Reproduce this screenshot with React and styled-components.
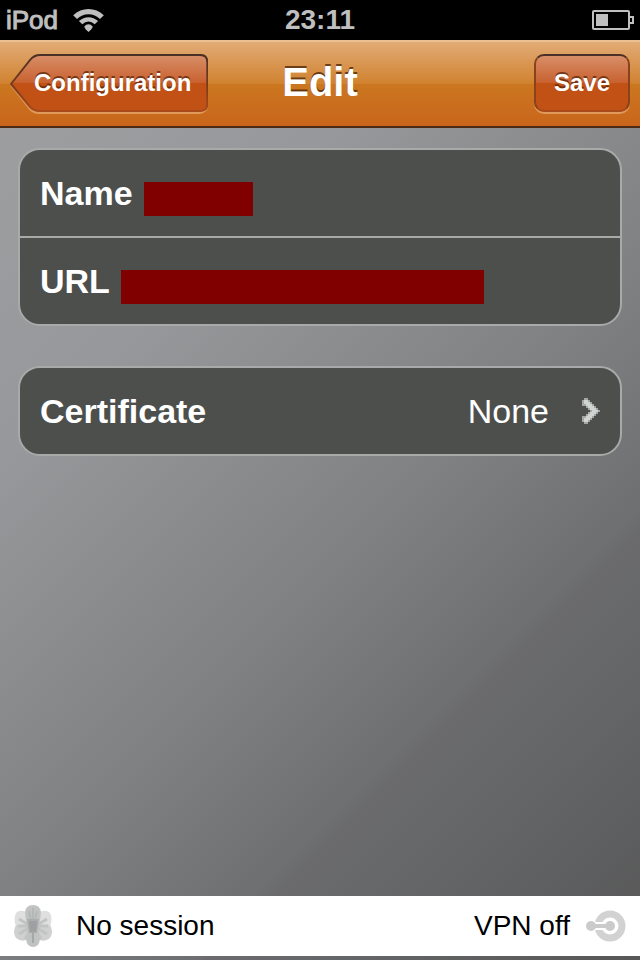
import React from 'react';
import styled, { createGlobalStyle } from 'styled-components';

const App = () => {
    return (
        <Page>
            <GlobalStyle />
            <StatusBar>
                <Carrier>
                    iPod
                    <WifiIcon />
                </Carrier>
                <Clock>23:11</Clock>
                <BatteryIcon />
            </StatusBar>
            <NavBar>
                <BackButton type="button">
                    <BackShape />
                    <span>Configuration</span>
                </BackButton>
                <Title>Edit</Title>
                <SaveButton type="button">Save</SaveButton>
            </NavBar>
            <Content>
                <Group>
                    <Row>
                        <Label htmlFor="name">Name</Label>
                        <Field id="name" type="text" $width="109px" />
                    </Row>
                    <Row>
                        <Label htmlFor="url">URL</Label>
                        <Field id="url" type="url" $width="363px" />
                    </Row>
                </Group>
                <Group>
                    <Row as="button" type="button">
                        <Label as="span">Certificate</Label>
                        <Value>None</Value>
                        <ChevronIcon />
                    </Row>
                </Group>
            </Content>
            <Footer>
                <FlowerIcon />
                <Session>No session</Session>
                <Vpn>
                    VPN off
                    <VpnIcon />
                </Vpn>
            </Footer>
        </Page>
    );
}

//icons
const WifiIcon = () => (
    <svg width="31" height="23" viewBox="0 0 32 24" fill="#bfbfbf" aria-hidden="true">
        <path d="M0 6.5 Q7 0 16 0 Q25 0 32 6.5 L28 10.5 Q23 5.5 16 5.5 Q9 5.5 4 10.5 Z" />
        <path d="M6 12.5 Q10.5 8.5 16 8.5 Q21.5 8.5 26 12.5 L22.5 16 Q19.5 13 16 13 Q12.5 13 9.5 16 Z" />
        <path d="M11.5 18.5 Q13.5 16 16 16 Q18.5 16 20.5 18.5 L19 21 L16 24 L13 21 Z" />
    </svg>
)

const BatteryIcon = () => (
    <Battery width="42" height="20" viewBox="0 0 42 20" aria-hidden="true">
        <rect x="1" y="1" width="36" height="18" rx="1" fill="none" stroke="#bfbfbf" strokeWidth="2" />
        <path d="M38 7 H41 V13 H38" fill="none" stroke="#bfbfbf" strokeWidth="2" />
        <rect x="4" y="4" width="12" height="12" fill="#bfbfbf" />
    </Battery>
)

const BackShape = () => (
    <Shape viewBox="0 0 198 60" preserveAspectRatio="none" aria-hidden="true">
        <defs>
            <linearGradient id="back-fill" x1="0" y1="0" x2="0" y2="1">
                <stop offset="0" stopColor="#d88e68" />
                <stop offset="0.5" stopColor="#c8612f" />
                <stop offset="0.5" stopColor="#c15114" />
                <stop offset="1" stopColor="#c15114" />
            </linearGradient>
            <linearGradient id="back-edge" x1="0" y1="0" x2="0" y2="1">
                <stop offset="0" stopColor="#4a3026" />
                <stop offset="0.5" stopColor="#74391b" />
                <stop offset="1" stopColor="#a84a1a" />
            </linearGradient>
        </defs>
        <path d="M1 31 L20 55 Q24 59 29 59 H188 Q197 59 197 50" fill="none" stroke="#e09a5c" strokeWidth="2" />
        <path
            d="M1 30 L20 6 Q24 1 30 1 H190 Q197 1 197 8 V50 Q197 57 190 57 H30 Q24 57 20 53 Z"
            fill="url(#back-fill)"
            stroke="url(#back-edge)"
            strokeWidth="2"
        />
    </Shape>
)

const ChevronIcon = () => (
    <svg width="18" height="26" viewBox="0 0 18 26" shapeRendering="crispEdges" aria-hidden="true">
        <path
            fill="#a3a7a5"
            d="M2 0 H6 V2 H8 V4 H10 V6 H12 V8 H14 V10 H16 V12 H18 V14 H16 V16 H14 V18 H12 V20 H10 V22 H8 V24 H6 V26 H2 V24 H0 V18 H4 V16 H6 V14 H8 V12 H6 V10 H4 V8 H0 V2 H2 Z"
        />
        <path
            fill="#d0d4d2"
            d="M2 2 H6 V4 H8 V6 H10 V8 H12 V10 H14 V12 H16 V14 H14 V16 H12 V18 H10 V20 H8 V22 H6 V24 H2 V20 H4 V18 H6 V16 H8 V14 H10 V12 H8 V10 H6 V8 H4 V6 H2 Z"
        />
    </svg>
)

const FlowerIcon = () => (
    <svg width="38" height="42" viewBox="0 0 38 42" aria-hidden="true">
        <path d="M2 8 Q6 4 12 7 H26 Q32 4 36 8 Q39 14 36 21 H2 Q-1 14 2 8 Z" fill="#dfdfdf" />
        <path d="M2 20 H36 Q40 27 36 33 Q31 37 26 35 H12 Q7 37 2 33 Q-2 27 2 20 Z" fill="#d0d0d0" />
        <path d="M11 7 Q12 0 19 0 Q26 0 27 7 Q27 14 24 21 H14 Q11 14 11 7 Z" fill="#c1c2c2" />
        <path d="M14 22 H24 L26 34 Q25 42 19 42 Q13 42 12 34 Z" fill="#c1c2c2" />
        <path
            d="M5 14 L15 20 M33 14 L23 20 M4 21 H34 M5 29 L15 23 M33 29 L23 23 M11 34 L17 24 M27 34 L21 24"
            fill="none"
            stroke="#c2c3c3"
            strokeWidth="3"
        />
        <path d="M15 6 L17 16 M23 6 L21 16 M19 3 V16" stroke="#b6b7b8" strokeWidth="2" />
        <path d="M13 14 H25 L23 28 H15 Z" fill="#acadae" />
        <path d="M15 16 H23 L22 27 H16 Z" fill="#9fa0a1" />
        <path d="M19 26 V38" stroke="#a6a7a8" strokeWidth="2" />
    </svg>
)

const VpnIcon = () => (
    <svg width="40" height="32" viewBox="0 0 40 32" aria-hidden="true">
        <circle cx="24" cy="16" r="12" fill="none" stroke="#d2d2d2" strokeWidth="7" />
        <path d="M6 12 H20 V20 H6 Z" fill="#fff" />
        <path d="M5 16 H24" stroke="#cbcbcb" strokeWidth="4" />
        <circle cx="5" cy="16" r="5" fill="#cbcbcb" />
        <circle cx="24" cy="16" r="5" fill="#cbcbcb" />
    </svg>
)

const GlobalStyle = createGlobalStyle`
    *{
        box-sizing: border-box;
    }
    body{
        margin: 0;
        font-family: "Liberation Sans", Arial, sans-serif;
    }
    button, input{
        font-family: inherit;
    }
    svg{
        flex-shrink: 0;
    }
`

const Page = styled.div`
    display: flex;
    flex-direction: column;
    min-height: 100vh;
    padding-bottom: 4px;
    background: linear-gradient(
        135deg,
        #a0a0a3 0%,
        #97989b 29%,
        #8d8f91 40%,
        #808183 56%,
        #6e6f70 72%,
        #6b6b6e 73%,
        #666768 80%,
        #575758 100%
    );
`

const StatusBar = styled.div`
    display: grid;
    grid-template-columns: 1fr auto 1fr;
    align-items: center;
    height: 40px;
    padding: 0 6px;
    background: black;
    color: #bfbfbf;
`

const Carrier = styled.div`
    display: flex;
    align-items: center;
    gap: 15px;
    font-size: 26px;
    line-height: 36px;
    -webkit-text-stroke: 1px #bfbfbf;
`

const Clock = styled.div`
    font-size: 28px;
    font-weight: bold;
    line-height: 36px;
`

const Battery = styled.svg`
    justify-self: end;
`

const NavBar = styled.header`
    display: grid;
    grid-template-columns: 1fr auto 1fr;
    align-items: center;
    height: 88px;
    padding: 0 10px;
    border-top: 2px solid #ebc194;
    border-bottom: 2px solid #4f2a12;
    background: linear-gradient(#e2ab76, #d0822f 50%, #cb7720 50%, #c9651b);
`

const BackButton = styled.button`
    position: relative;
    justify-self: start;
    height: 60px;
    padding: 0 17px 2px 24px;
    border: none;
    background: none;
    color: white;
    font-size: 24px;
    font-weight: bold;
    text-shadow: 0 -2px 0 rgba(60, 20, 0, 0.6);
    span{
        position: relative;
    }
`

const Shape = styled.svg`
    position: absolute;
    inset: 0;
    width: 100%;
    height: 100%;
`

const Title = styled.h1`
    margin: 0;
    padding-bottom: 4px;
    color: white;
    font-size: 40px;
    line-height: 48px;
    text-shadow: 0 -2px 0 rgba(60, 25, 0, 0.7);
`

const SaveButton = styled.button`
    justify-self: end;
    height: 58px;
    margin-bottom: 2px;
    padding: 0 18px;
    border: 2px solid;
    border-color: #4a3026 #8a421b #a84a1a;
    border-radius: 10px;
    background: linear-gradient(#d88e68, #c8612f 50%, #c15114 50%);
    box-shadow: 0 2px 0 #e09a5c;
    color: white;
    font-size: 24px;
    font-weight: bold;
    text-shadow: 0 -2px 0 rgba(60, 20, 0, 0.6);
`

const Content = styled.main`
    display: flex;
    flex: 1;
    flex-direction: column;
    gap: 40px;
    padding: 20px 18px;
`

const Group = styled.section`
    overflow: hidden;
    border: 2px solid #a8aaa9;
    border-radius: 22px;
    background: #4d4f4d;
`

const Row = styled.div`
    display: flex;
    align-items: center;
    gap: 11px;
    width: 100%;
    height: 86px;
    padding: 0 20px;
    border: none;
    background: none;
    color: white;
    font-size: 34px;
    & + &{
        height: 88px;
        border-top: 2px solid #a8aaa9;
    }
`

const Label = styled.label`
    font-weight: bold;
`

const Field = styled.input`
    width: ${(props) => props.$width};
    height: 34px;
    margin: 12px 0 0;
    padding: 0 4px;
    border: none;
    background: #800000;
    color: white;
    font-size: 28px;
`

const Value = styled.span`
    margin-left: auto;
    margin-right: 22px;
`

const Footer = styled.footer`
    display: flex;
    align-items: center;
    justify-content: space-between;
    gap: 24px;
    height: 60px;
    padding: 0 14px;
    background: white;
    color: black;
    font-size: 28px;
`

const Session = styled.span`
    flex: 1;
`

const Vpn = styled.span`
    display: flex;
    align-items: center;
    gap: 16px;
`

export default App;
